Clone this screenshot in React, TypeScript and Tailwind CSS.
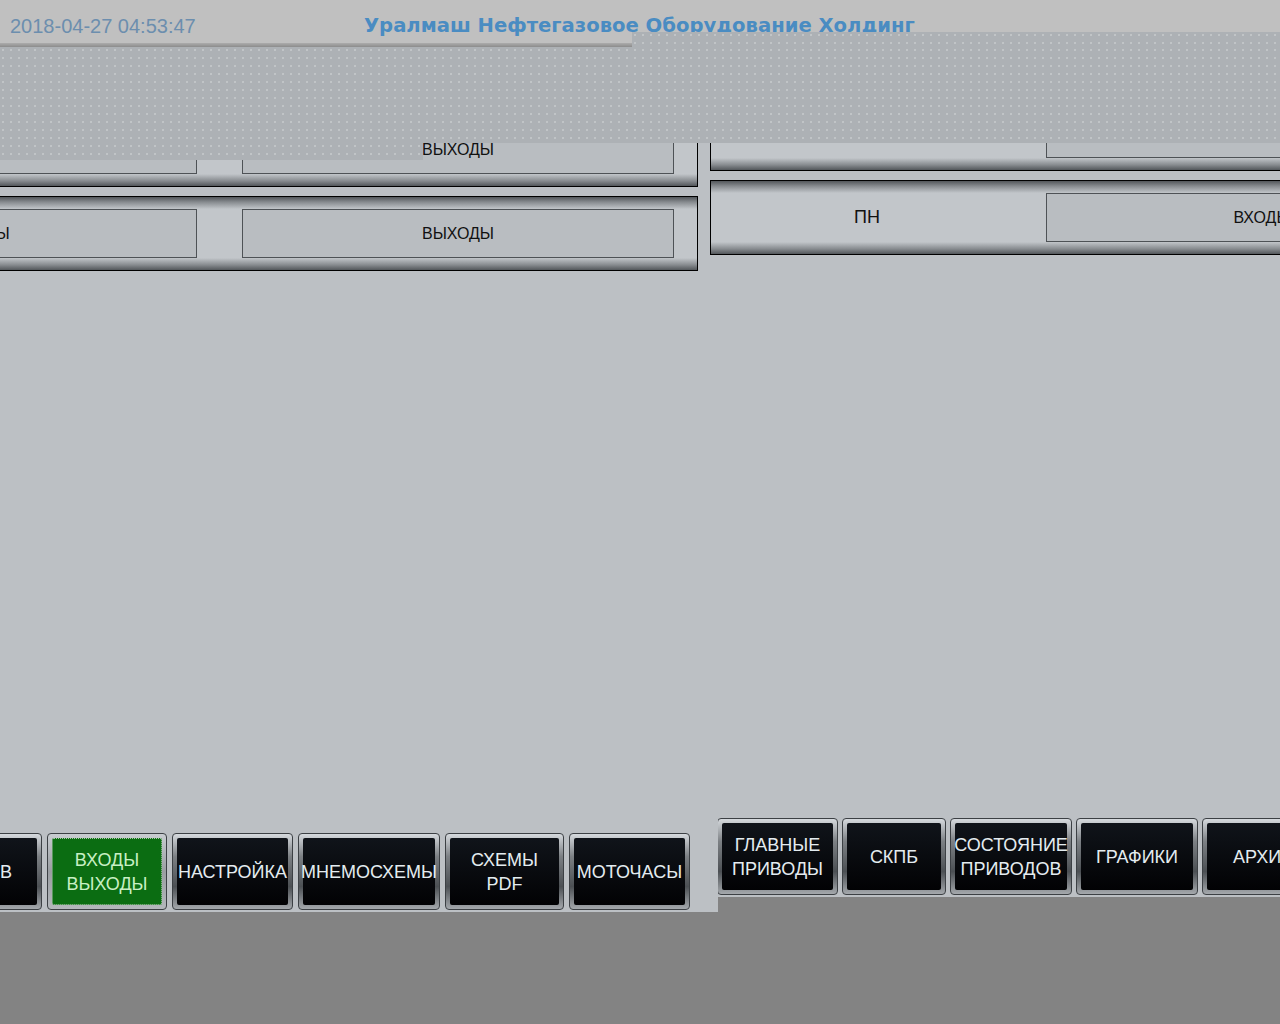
import React from "react";

function Box({ children }: { children?: React.ReactNode }) {
  return (
    <div className="w-[432px] h-[49px] shrink-0 border border-[#4e5256] bg-[#b9bdc1] flex items-center justify-center text-[16px] text-[#111111]">
      {children}
    </div>
  );
}

function Band({ dir }: { dir: "top" | "bottom" }) {
  return dir === "top" ? (
    <div className="h-[12px] w-full bg-[linear-gradient(to_bottom,#53575b_0%,#8a8e92_45%,#c2c6ca_100%)]" />
  ) : (
    <div className="h-[12px] w-full bg-[linear-gradient(to_bottom,#c2c6ca_0%,#8a8e92_55%,#53575b_100%)]" />
  );
}

function LeftPanel({ a, b }: { a: string; b: string }) {
  return (
    <div className="w-[956px] h-[75px] border border-black bg-[#c2c6ca] flex flex-col">
      <Band dir="top" />
      <div className="h-[49px] flex pl-[22px] gap-[45px]">
        <Box>{a}</Box>
        <Box>{b}</Box>
      </div>
      <Band dir="bottom" />
    </div>
  );
}

function RightPanel({ label, b }: { label: string; b: string }) {
  return (
    <div className="w-[780px] h-[75px] border border-black bg-[#c2c6ca] flex flex-col">
      <Band dir="top" />
      <div className="h-[49px] flex gap-[23px]">
        <div className="w-[312px] shrink-0 flex items-center justify-center text-[18px] text-[#111111]">
          {label}
        </div>
        <Box>{b}</Box>
      </div>
      <Band dir="bottom" />
    </div>
  );
}

function NavBtn({
  cls,
  lines,
  active,
}: {
  cls: string;
  lines: string[];
  active?: boolean;
}) {
  return (
    <div
      className={
        "h-[77px] shrink-0 rounded-[4px] p-[4px] border border-[#3c4044] " +
        (active
          ? "bg-[linear-gradient(to_bottom,#c8ccd0_0%,#9a9ea2_50%,#b4b8bc_100%)] "
          : "bg-[linear-gradient(to_bottom,#d6dade_0%,#7c8084_30%,#4c5054_70%,#a4a8ac_100%)] ") +
        cls
      }
    >
      <div
        className={
          "h-full w-full rounded-[2px] flex flex-col items-center justify-center text-center text-[18px] leading-[24px] whitespace-nowrap " +
          (active
            ? "bg-[#0b6d12] text-[#c8f0c4] border border-dotted border-[#a8c8a8]"
            : "bg-[linear-gradient(to_bottom,#10141a,#020204)] text-[#e4ecf0]")
        }
      >
        {lines.map((l, i) => (
          <span key={i}>{l}</span>
        ))}
      </div>
    </div>
  );
}

const dots =
  "bg-[#adb1b5] bg-[radial-gradient(circle_at_3px_3px,#c8ccce_0.6px,transparent_1px)] bg-[length:8px_8px]";

export default function App() {
  return (
    <div className="relative w-[1280px] h-[1024px] overflow-hidden bg-[#838383] flex flex-col font-['Liberation_Sans','Arial',sans-serif]">
      {/* header */}
      <div className="h-[47px] shrink-0 bg-[#c0c0c0] flex flex-col">
        <div className="h-[43px] flex items-center pt-[9px]">
          <div className="w-[364px] shrink-0 pl-[10px] text-[20px] text-[#6c8eae]">
            2018-04-27 04:53:47
          </div>
          <div className="whitespace-nowrap font-['DejaVu_Sans',sans-serif] font-bold text-[19.6px] text-[#4a8cc2]">
            Уралмаш Нефтегазовое Оборудование Холдинг
          </div>
        </div>
        <div className="h-[4px] w-[632px] bg-[linear-gradient(to_bottom,#acacac,#8c8c8c)]" />
      </div>

      {/* main */}
      <div className="h-[768px] shrink-0 bg-[#bcc0c4] flex items-start overflow-hidden">
        <div className="ml-[-258px] w-[956px] shrink-0 pt-[65px] flex flex-col gap-[9px]">
          <LeftPanel a="ВХОДЫ" b="ВЫХОДЫ" />
          <LeftPanel a="ВХОДЫ" b="ВЫХОДЫ" />
        </div>
        <div className="ml-[12px] w-[780px] shrink-0 pt-[49px] flex flex-col gap-[9px]">
          <RightPanel label="ПЧ" b="ВХОДЫ" />
          <RightPanel label="ПН" b="ВХОДЫ" />
        </div>
      </div>

      {/* bottom nav */}
      <div className="flex items-start">
        <div className="w-[718px] h-[97px] shrink-0 bg-[#bcc0c4] pt-[18px] overflow-hidden">
          <div className="flex gap-[5px] ml-[-113px]">
            <NavBtn cls="w-[155px]" lines={["ДАТЧИКОВ"]} />
            <NavBtn cls="w-[120px]" lines={["ВХОДЫ", "ВЫХОДЫ"]} active />
            <NavBtn cls="w-[121px]" lines={["НАСТРОЙКА"]} />
            <NavBtn cls="w-[142px]" lines={["МНЕМОСХЕМЫ"]} />
            <NavBtn cls="w-[119px]" lines={["СХЕМЫ", "PDF"]} />
            <NavBtn cls="w-[121px]" lines={["МОТОЧАСЫ"]} />
          </div>
        </div>
        <div className="w-[562px] h-[82px] shrink-0 bg-[#bcc0c4] pt-[3px] overflow-hidden">
          <div className="flex gap-[4px] ml-[-1px]">
            <NavBtn cls="w-[121px]" lines={["ГЛАВНЫЕ", "ПРИВОДЫ"]} />
            <NavBtn cls="w-[104px]" lines={["СКПБ"]} />
            <NavBtn cls="w-[122px]" lines={["СОСТОЯНИЕ", "ПРИВОДОВ"]} />
            <NavBtn cls="w-[122px]" lines={["ГРАФИКИ"]} />
            <NavBtn cls="w-[122px]" lines={["АРХИВ"]} />
          </div>
        </div>
      </div>

      {/* overlapping dotted window fragments */}
      <div className={"absolute left-0 top-[47px] w-[1280px] h-[96px] " + dots} />
      <div className={"absolute left-[632px] top-[32px] w-[648px] h-[15px] " + dots} />
      <div className={"absolute left-0 top-[143px] w-[423px] h-[17px] " + dots} />
    </div>
  );
}
